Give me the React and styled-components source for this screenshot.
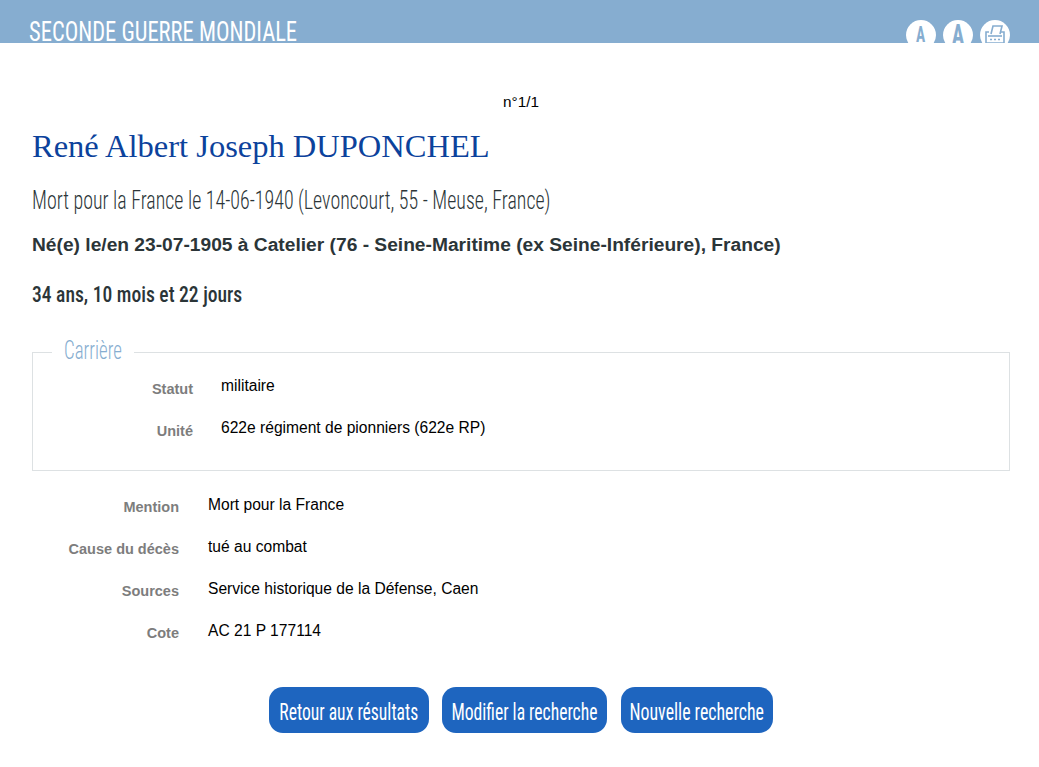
import styled, { createGlobalStyle } from "styled-components";

const narrow = `"Liberation Sans Narrow", "Roboto Condensed", "DejaVu Sans Condensed", "Liberation Sans", sans-serif`;

const GlobalStyle = createGlobalStyle`
  html, body {
    margin: 0;
    padding: 0;
    background: #fff;
    font-family: "Liberation Sans", Arial, sans-serif;
    color: #000;
  }
`;

// no Oswald here, so the condensed face gets squeezed a bit more
const Squeeze = styled.span`
  display: inline-block;
  white-space: nowrap;
  transform: scaleX(${(p) => p.$x});
  transform-origin: ${(p) => p.$origin || "left"} center;
`;

const Header = styled.header`
  height: 43px;
  background: #86add0;
  overflow: hidden;
  display: flex;
  justify-content: space-between;
  padding: 0 29px;
`;
const SiteTitle = styled.div`
  font-family: ${narrow};
  font-size: 28px;
  line-height: 30px;
  margin-top: 17px;
  color: #fff;
`;
const Tools = styled.div`
  display: flex;
  gap: 7px;
  margin-top: 20px;
`;
const Round = styled.div`
  width: 30px;
  height: 30px;
  border-radius: 50%;
  background: #fff;
  color: #86add0;
  font-family: ${narrow};
  font-weight: bold;
  font-size: ${(p) => p.$size}px;
  line-height: 30px;
  text-align: center;
  svg {
    display: block;
    margin: 3px auto 0;
  }
`;
const Main = styled.main`
  padding: 0 29px 0 32px;
`;
const Count = styled.div`
  text-align: center;
  font-size: 15.3px;
  line-height: 16px;
  padding-top: 51px;
`;
const Name = styled.h1`
  margin: 18px 0 0;
  font-family: "Liberation Serif", serif;
  font-weight: normal;
  font-size: 32.5px;
  line-height: 36px;
  color: #0c429c;
`;
const Death = styled.h2`
  margin: 23px 0 0;
  font-family: ${narrow};
  font-weight: 300;
  font-size: 25px;
  line-height: 28px;
  color: #2b3538;
`;
const Birth = styled.h3`
  margin: 19px 0 0;
  font-size: 19.2px;
  line-height: 22px;
  font-weight: bold;
  color: #2b3538;
`;
const Age = styled.div`
  margin-top: 25px;
  font-family: ${narrow};
  font-size: 22px;
  line-height: 28px;
  font-weight: 500;
  color: #2b3538;
`;
const Box = styled.fieldset`
  margin: 28px 0 0;
  padding: 5px 0 14px;
  border: 1px solid #dde1e3;
  min-width: 0;
`;
const Legend = styled.legend`
  margin-left: 19px;
  padding: 0 12px 2px;
  width: 58px;
  box-sizing: content-box;
  font-family: ${narrow};
  font-weight: 300;
  font-size: 25px;
  line-height: 28px;
  color: #86add0;
`;
const Row = styled.div`
  display: grid;
  grid-template-columns: ${(p) => p.$label}px 1fr;
  column-gap: ${(p) => p.$gap}px;
  height: 42px;
`;
const Label = styled.div`
  text-align: right;
  font-size: 14.5px;
  font-weight: bold;
  line-height: 16px;
  padding-top: 9px;
  color: #7d7d7d;
`;
const Value = styled.div`
  font-size: 15.6px;
  line-height: 16px;
  padding-top: 6px;
`;
const List = styled.div`
  margin-top: 20px;
  ${Label} {
    padding-top: 8px;
  }
`;
const Actions = styled.div`
  display: flex;
  justify-content: center;
  gap: 13px;
  margin-top: 28px;
`;
const Button = styled.button`
  display: flex;
  align-items: center;
  justify-content: center;
  width: ${(p) => p.$w}px;
  height: 46px;
  padding: 5px 0 0;
  border: 0;
  border-radius: 14px;
  background: #1e65bf;
  color: #fff;
  font-family: ${narrow};
  font-size: 23px;
  cursor: pointer;
  &:last-child {
    margin-left: 1px;
  }
`;

const Printer = () => (
  <svg width="24" height="24" viewBox="0 0 24 24" fill="none" stroke="#86add0" strokeWidth="1.6">
    <path d="M8 11 L10 3 H19 L17 11" />
    <path d="M6 9 H3 V20 H21 V9 H18" />
    <path d="M5 13 H19" />
    <path d="M7 16.5 H9 M11 16.5 H13 M15 16.5 H17" />
  </svg>
);

const rows = [
  ["Mention", "Mort pour la France"],
  ["Cause du décès", "tué au combat"],
  ["Sources", "Service historique de la Défense, Caen"],
  ["Cote", "AC 21 P 177114"],
];

export default function App() {
  return (
    <>
      <GlobalStyle />
      <Header>
        <SiteTitle>
          <Squeeze $x={0.805}>SECONDE GUERRE MONDIALE</Squeeze>
        </SiteTitle>
        <Tools>
          <Round $size={22}><Squeeze $x={0.7} $origin="center">A</Squeeze></Round>
          <Round $size={30}><Squeeze $x={0.7} $origin="center">A</Squeeze></Round>
          <Round><Printer /></Round>
        </Tools>
      </Header>
      <Main>
        <Count>n°1/1</Count>
        <Name>René Albert Joseph DUPONCHEL</Name>
        <Death>
          <Squeeze $x={0.797}>Mort pour la France le 14-06-1940 (Levoncourt, 55 - Meuse, France)</Squeeze>
        </Death>
        <Birth>Né(e) le/en 23-07-1905 à Catelier (76 - Seine-Maritime (ex Seine-Inférieure), France)</Birth>
        <Age>
          <Squeeze $x={0.89}>34 ans, 10 mois et 22 jours</Squeeze>
        </Age>
        <Box>
          <Legend><Squeeze $x={0.755}>Carrière</Squeeze></Legend>
          <Row $label={160} $gap={28}><Label>Statut</Label><Value>militaire</Value></Row>
          <Row $label={160} $gap={28}><Label>Unité</Label><Value>622e régiment de pionniers (622e RP)</Value></Row>
        </Box>
        <List>
          {rows.map(([label, value]) => (
            <Row key={label} $label={147} $gap={29}>
              <Label>{label}</Label>
              <Value>{value}</Value>
            </Row>
          ))}
        </List>
        <Actions>
          <Button $w={160}><Squeeze $x={0.765} $origin="center">Retour aux résultats</Squeeze></Button>
          <Button $w={165}><Squeeze $x={0.765} $origin="center">Modifier la recherche</Squeeze></Button>
          <Button $w={152}><Squeeze $x={0.775} $origin="center">Nouvelle recherche</Squeeze></Button>
        </Actions>
      </Main>
    </>
  );
}
